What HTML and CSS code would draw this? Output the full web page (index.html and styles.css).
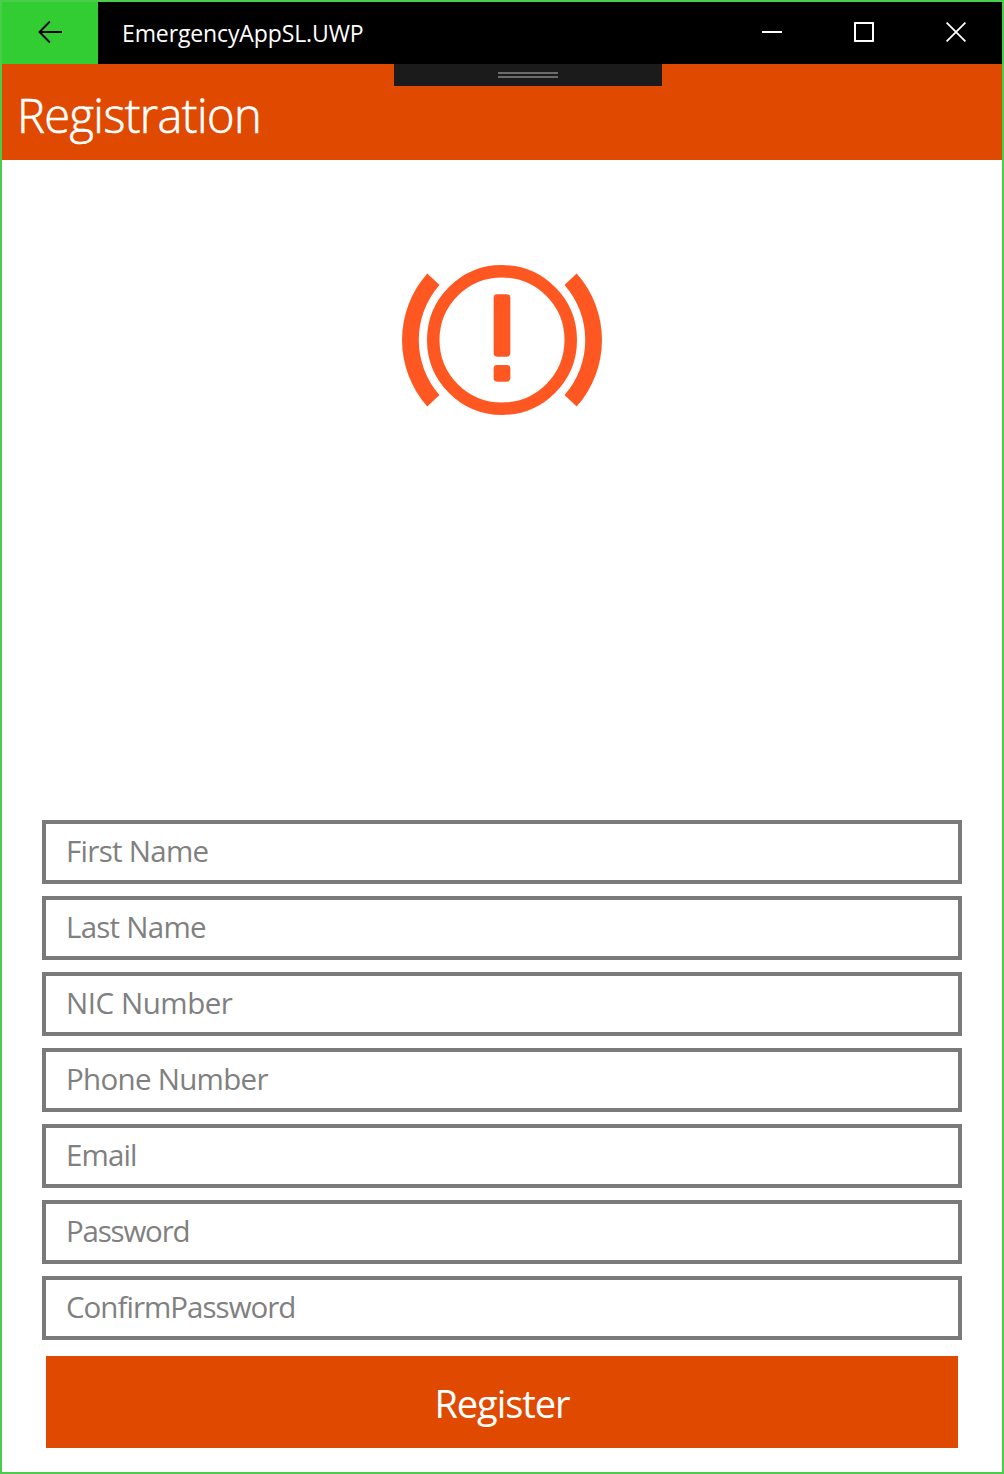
FILE: index.html
```html
<!DOCTYPE html>
<html lang="en">
<head>
<meta charset="utf-8">
<title>EmergencyAppSL.UWP</title>
<link rel="stylesheet" href="styles.css">
</head>
<body>
<div class="window">
  <header class="titlebar">
    <button class="back" aria-label="Back">
      <svg width="26" height="24" viewBox="0 0 26 24" fill="none" stroke="#000" stroke-width="1.900"><path d="M25 12H2.500M12.900 1.500 2.500 12 12.900 22.500"/></svg>
    </button>
    <div class="app-name"><span>EmergencyAppSL.UWP</span></div>
    <div class="controls">
      <button class="control" aria-label="Minimize"><svg width="20" height="20" stroke="#fff" stroke-width="2"><path d="M0 10H20"/></svg></button>
      <button class="control" aria-label="Maximize"><svg width="20" height="20" fill="none" stroke="#fff" stroke-width="2"><path d="M1 1H19V19H1Z"/></svg></button>
      <button class="control" aria-label="Close"><svg width="20" height="20" stroke="#fff" stroke-width="1.800"><path d="M.6.6 19.400 19.400M19.400.6.6 19.400"/></svg></button>
    </div>
  </header>
  <div class="page-header">
    <h1><span>Registration</span></h1>
    <div class="debug-bar"><i></i><i></i></div>
  </div>
  <main class="content">
    <div class="logo">
      <svg width="200" height="200" viewBox="0 0 24 24" fill="#ff5722">
        <path d="M3.040 4.020A12 12 0 0 0 3.040 19.980L4.500 18.600A10 10 0 0 1 4.500 5.400ZM20.960 4.020A12 12 0 0 1 20.960 19.980L19.500 18.600A10 10 0 0 0 19.500 5.400Z"/>
        <circle cx="12" cy="12" r="8.250" fill="none" stroke="#ff5722" stroke-width="1.500"/>
        <rect x="11" y="6.500" width="2" height="7.500" rx=".4"/>
        <rect x="11" y="15" width="2" height="2" rx=".4"/>
      </svg>
    </div>
    <form class="form">
      <input class="field first" type="text" placeholder="First Name">
      <input class="field last" type="text" placeholder="Last Name">
      <input class="field nic" type="text" placeholder="NIC Number">
      <input class="field phone" type="text" placeholder="Phone Number">
      <input class="field email" type="text" placeholder="Email">
      <input class="field password" type="password" placeholder="Password">
      <input class="field confirm" type="password" placeholder="ConfirmPassword">
      <button class="register" type="button"><span>Register</span></button>
    </form>
  </main>
</div>
</body>
</html>
```
FILE: styles.css
```css
* { box-sizing: border-box; }
body { margin: 0; background: #fff; font-family: "Open Sans", "Noto Sans", sans-serif; }
button { border: 0; padding: 0; font-family: inherit; border-radius: 0; }
svg { display: block; }
.window { height: 1474px; border: 2px solid #4acd4a; display: flex; flex-direction: column; }
.titlebar { height: 62px; display: flex; background: #000; color: #fff; }
.back { width: 96px; background: #32cd32; display: flex; align-items: center; justify-content: center; padding-bottom: 2px; }
.app-name { flex: 1; padding-left: 24px; font-size: 23px; line-height: 63px; letter-spacing: -0.12px; }
.controls { display: flex; }
.control { width: 92px; background: none; display: flex; align-items: center; justify-content: center; padding-bottom: 2px; }
.page-header { position: relative; height: 96px; background: #e04a00; color: #fff; }
h1 { margin: 0; padding-left: 15px; font-size: 47px; font-weight: 300; line-height: 102px; letter-spacing: -0.6px; -webkit-text-stroke: 0.6px #fff; }
.debug-bar { position: absolute; left: 392px; top: 0; width: 268px; height: 22px; background: #1b1b1b; display: flex; flex-direction: column; align-items: center; gap: 2px; padding-top: 8px; }
.debug-bar i { width: 60px; height: 2px; background: #6b6b6b; }
.content { flex: 1; display: flex; flex-direction: column; justify-content: space-between; padding: 80px 40px 24px; }
.logo { display: flex; justify-content: center; }
.form { display: flex; flex-direction: column; gap: 12px; }
.field { width: 100%; height: 64px; border: 4px solid #7a7a7a; border-radius: 0; background: #fff; padding: 0 20px 4px; outline: 0; font-family: inherit; font-size: 29.500px; color: #000; letter-spacing: -0.7px; }
.field::placeholder { color: #808080; opacity: 1; }
.last { letter-spacing: -0.75px; }
.nic { letter-spacing: -0.45px; }
.email { letter-spacing: -0.9px; }
.password { letter-spacing: -1.2px; }
.confirm { letter-spacing: -0.98px; }
.register { height: 92px; margin: 4px 4px 0; background: #e04a00; color: #fff; font-size: 38px; line-height: 94px; letter-spacing: -1.05px; }
```
